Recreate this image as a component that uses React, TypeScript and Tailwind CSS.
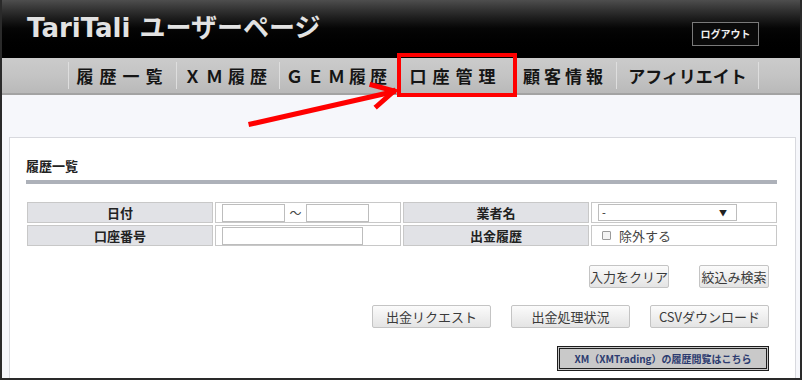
const jp = "font-['Noto_Sans_CJK_JP','Noto_Sans',sans-serif]";

const navItems = [
  { label: "履歴一覧", w: "w-[108px]", track: "tracking-[6px]" },
  { label: "ＸＭ履歴", w: "w-[103px]", track: "tracking-[5px]" },
  { label: "ＧＥＭ履歴", w: "w-[118px]", track: "tracking-[4px]" },
  { label: "口座管理", w: "w-[116px]", track: "tracking-[6px]" },
  { label: "顧客情報", w: "w-[103px]", track: "tracking-[4px]" },
  { label: "アフィリエイト", w: "w-[143px]", track: "tracking-[0px]" },
];

function Btn({ children, w }: { children: React.ReactNode; w: string }) {
  return (
    <button
      className={`${w} h-[23px] rounded-[2px] border border-[#c4c4c4] bg-gradient-to-b from-[#fbfbfb] to-[#e4e4e4] text-[13px] leading-none text-[#3a3a3a] ${jp}`}
    >
      {children}
    </button>
  );
}

export default function App() {
  return (
    <div className="relative w-[802px] h-[380px] overflow-hidden border-x-2 border-b-2 border-[#2a2a2a] bg-[#f6f7fb]">
      {/* header */}
      <header className="h-[58px] bg-gradient-to-b from-[#4e4e4e] via-[#050505] to-black flex items-start justify-between">
        <h1 className="pl-[25px] pt-[10px] text-[26px] font-bold leading-[32px] text-[#e2e2e2] whitespace-nowrap">
          <span className="font-['DejaVu_Sans',sans-serif]">TariTali </span>
          <span className={jp}>ユーザーページ</span>
        </h1>
        <button
          className={`mt-[22px] mr-[41px] w-[67px] h-[24px] border border-[#7a7a7a] bg-[#0a0a0a] text-[#f0f0f0] text-[10px] font-bold leading-none ${jp}`}
        >
          ログアウト
        </button>
      </header>

      {/* nav */}
      <nav className="h-[37px] flex pl-[66px] bg-gradient-to-b from-[#cbcbcb] via-[#c4c4c4] to-[#b9b9b9] border-b-2 border-[#a3a3a3]">
        {navItems.map((n, i) => (
          <div
            key={n.label}
            className={`${n.w} my-[4px] flex items-center justify-center border-l border-[#dedede] ${
              i === navItems.length - 1 ? "border-r" : ""
            }`}
          >
            <span
              className={`text-[17px] font-bold leading-none text-[#151515] ${n.track} ${jp}`}
            >
              {n.label}
            </span>
          </div>
        ))}
      </nav>

      {/* content */}
      <main className="pt-[42px] pl-[7px] pr-[4px]">
        <section className={`border border-[#d8d9de] bg-white pl-[16px] pr-[18px] pt-[18px] h-[260px] ${jp}`}>
          <h2 className="text-[13px] font-bold leading-[20px] text-[#222]">履歴一覧</h2>
          <div className="mt-[4px] h-[4px] bg-[#adb1b9]" />

          <div className="mt-[18px] ml-[1px] grid grid-cols-[186px_186px_186px_186px] grid-rows-[21px_21px] gap-[2px] text-[13px]">
            <div className="border border-[#c8c8c8] bg-[#e1e2e6] flex items-center justify-center font-bold text-[#222]">日付</div>
            <div className="border border-[#c8c8c8] flex items-center pl-[6px]">
              <div className="w-[63px] h-[18px] border border-[#bdbdbd]" />
              <span className="w-[21px] text-center text-[12px] text-[#444]">〜</span>
              <div className="w-[63px] h-[18px] border border-[#bdbdbd]" />
            </div>
            <div className="border border-[#c8c8c8] bg-[#e1e2e6] flex items-center justify-center font-bold text-[#222]">業者名</div>
            <div className="border border-[#c8c8c8] flex items-center pl-[6px]">
              <div className="w-[139px] h-[17px] border border-[#bdbdbd] flex items-center justify-between px-[3px] text-[11px] text-[#222]">
                <span>-</span>
                <span className="text-[8px] pr-[6px]">▼</span>
              </div>
            </div>
            <div className="border border-[#c8c8c8] bg-[#e1e2e6] flex items-center justify-center font-bold text-[#222]">口座番号</div>
            <div className="border border-[#c8c8c8] flex items-center pl-[6px]">
              <div className="w-[141px] h-[18px] border border-[#bdbdbd]" />
            </div>
            <div className="border border-[#c8c8c8] bg-[#e1e2e6] flex items-center justify-center font-bold text-[#222]">出金履歴</div>
            <div className="border border-[#c8c8c8] flex items-center pl-[10px] gap-[8px] text-[#444]">
              <span className="w-[9px] h-[9px] border border-[#9a9a9a] rounded-[1px] bg-[#f3f3f3]" />
              <span className="text-[13px] leading-none">除外する</span>
            </div>
          </div>

          <div className="mt-[19px] flex justify-end gap-[30px] pr-[8px]">
            <Btn w="w-[80px]">入力をクリア</Btn>
            <Btn w="w-[70px]">絞込み検索</Btn>
          </div>

          <div className="mt-[17px] flex justify-end gap-[20px] pr-[8px]">
            <Btn w="w-[119px]">出金リクエスト</Btn>
            <Btn w="w-[119px]">出金処理状況</Btn>
            <Btn w="w-[119px]">CSVダウンロード</Btn>
          </div>

          <div className="mt-[18px] flex justify-end pr-[8px]">
            <button className="w-[212px] h-[25px] border-[3px] border-double border-[#1e1e1e] bg-[#c9c9c9] text-[10px] font-bold text-[#2c3b70] leading-none">
              XM（XMTrading）の履歴閲覧はこちら
            </button>
          </div>
        </section>
      </main>

      {/* annotation overlay */}
      <div className="absolute left-[395px] top-[53px] w-[120px] h-[44px] border-4 border-[#ff0000]" />
      <svg className="absolute left-0 top-0" width="802" height="380" viewBox="0 0 802 380">
        <g stroke="#ff0000" strokeWidth="5" strokeLinecap="square" fill="none">
          <line x1="249" y1="124" x2="390" y2="92" />
          <line x1="370" y1="85" x2="392" y2="91" />
          <line x1="375" y1="106" x2="392" y2="91" />
        </g>
      </svg>
    </div>
  );
}
